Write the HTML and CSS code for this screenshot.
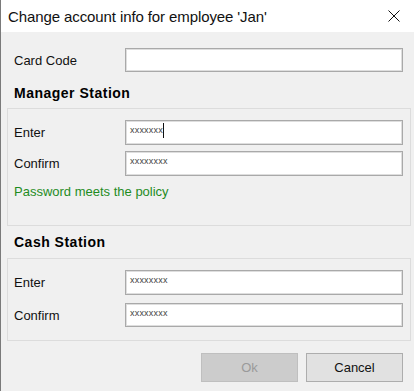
FILE: index.html
```html
<!DOCTYPE html>
<html>
<head>
<meta charset="utf-8">
<link rel="stylesheet" href="styles.css">
</head>
<body>
<div class="window">
  <div class="titlebar">
    <span class="title">Change account info for employee 'Jan'</span>
    <span class="close">
      <svg width="12" height="12" viewBox="0 0 12 12"><path d="M0.5 0.5 L11.5 11.5 M11.5 0.5 L0.5 11.5" stroke="#111" stroke-width="1" fill="none"/></svg>
    </span>
  </div>
  <div class="content">
    <div class="row card-row">
      <label class="label">Card Code</label>
      <div class="input"></div>
    </div>

    <div class="heading heading-manager">Manager Station</div>
    <div class="group group-manager">
      <div class="row">
        <label class="label">Enter</label>
        <div class="input"><span class="pw">xxxxxxx</span><span class="caret"></span></div>
      </div>
      <div class="row row-gap6">
        <label class="label">Confirm</label>
        <div class="input"><span class="pw">xxxxxxxx</span></div>
      </div>
      <div class="status">Password meets the policy</div>
    </div>

    <div class="heading heading-cash">Cash Station</div>
    <div class="group group-cash">
      <div class="row">
        <label class="label">Enter</label>
        <div class="input"><span class="pw">xxxxxxxx</span></div>
      </div>
      <div class="row row-gap8">
        <label class="label">Confirm</label>
        <div class="input"><span class="pw">xxxxxxxx</span></div>
      </div>
    </div>

    <div class="buttons">
      <button class="btn btn-disabled">Ok</button>
      <button class="btn btn-cancel">Cancel</button>
    </div>
  </div>
</div>
</body>
</html>
```

FILE: styles.css
```css
html, body {
  margin: 0;
  padding: 0;
  background: #f0f0f0;
}
.window {
  width: 414px;
  height: 391px;
  box-sizing: border-box;
  border-left: 1px solid #7a7a7a;
  background: #f0f0f0;
  font-family: "Liberation Sans", Arial, sans-serif;
  font-size: 13px;
  color: #000;
  overflow: hidden;
}
.titlebar {
  height: 32px;
  background: #fff;
  display: flex;
  align-items: center;
  justify-content: space-between;
  padding: 0 14px 0 7px;
}
.title {
  font-size: 15px;
  letter-spacing: -0.1px;
  color: #111;
}
.close {
  display: flex;
  width: 12px;
  height: 12px;
}
.content {
  padding: 16px 3px 0 6px;
}
.row {
  display: flex;
  align-items: center;
}
.card-row {
  padding: 0 8px 0 7px;
}
.label {
  width: 111px;
  flex: none;
  color: #111;
}
.input {
  flex: 1;
  height: 25px;
  box-sizing: border-box;
  background: #fff;
  border: 1px solid #a9a9a9;
  box-shadow: inset 0 0 0 1px #dedede;
  display: flex;
  align-items: flex-start;
  padding: 4px 0 0 4px;
}
.card-row .input {
  height: 24px;
}
.pw {
  font-size: 9px;
  line-height: 10px;
  color: #444;
  letter-spacing: 0.2px;
}
.caret {
  width: 1px;
  height: 15px;
  background: #111;
  margin-top: -2px;
  margin-left: 0;
}
.heading {
  font-weight: bold;
  font-size: 14px;
  letter-spacing: 0.5px;
  line-height: 16px;
  padding-left: 7px;
}
.heading-manager {
  margin: 13px 0 7px;
}
.heading-cash {
  margin: 8px 0 8px;
}
.group {
  border: 1px solid #dcdcdc;
  padding: 11px 7px 0 6px;
}
.group-manager {
  padding-bottom: 25px;
}
.group-cash {
  padding-bottom: 13px;
}
.row-gap6 {
  margin-top: 6px;
}
.row-gap8 {
  margin-top: 8px;
}
.group-cash .row-gap8 .input {
  height: 24px;
}
.status {
  margin-top: 8px;
  line-height: 16px;
  color: #1f8c1f;
}
.buttons {
  display: flex;
  justify-content: flex-end;
  gap: 8px;
  margin-top: 12px;
  padding-right: 8px;
}
.btn {
  width: 97px;
  height: 29px;
  font-family: "Liberation Sans", Arial, sans-serif;
  font-size: 13px;
  box-sizing: border-box;
  padding: 0;
}
.btn-disabled {
  background: #cccccc;
  border: 1px solid #bfbfbf;
  color: #9a9a9a;
}
.btn-cancel {
  background: #e1e1e1;
  border: 1px solid #adadad;
  color: #111;
}
```
